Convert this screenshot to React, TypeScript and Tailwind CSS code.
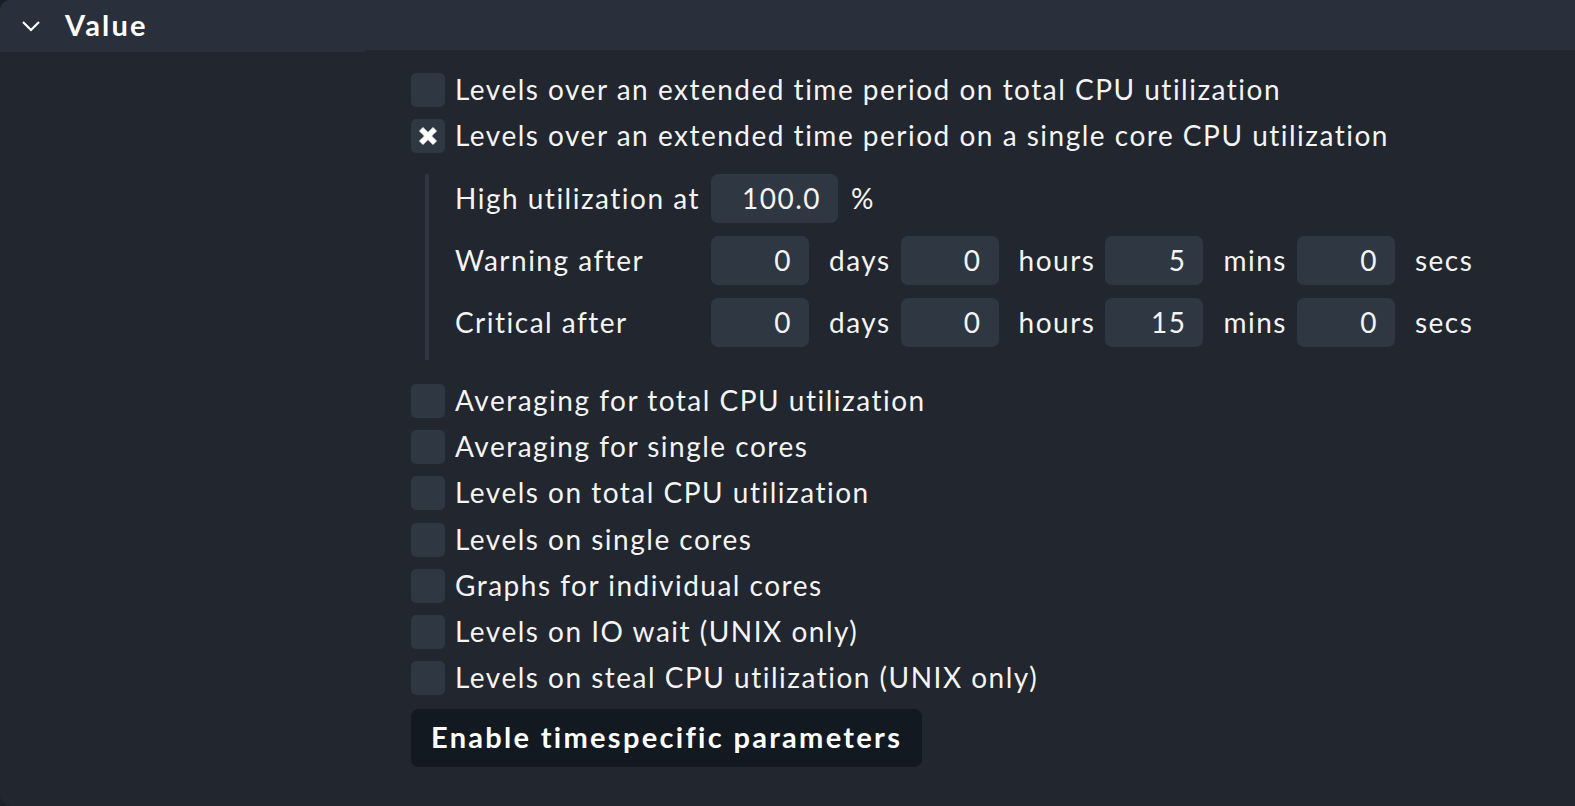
import React from "react";

const font = { fontFamily: "Lato, 'Noto Sans', sans-serif" };
const txt = "text-[28px] tracking-[1.5px] text-[#f4f4f4] leading-none pb-[2px]";

function Checkbox({ checked }: { checked?: boolean }) {
  return (
    <div className="w-[34px] h-[34px] rounded-[5px] bg-[#2f3743] flex items-center justify-center shrink-0">
      {checked && (
        <svg width="22" height="22" viewBox="0 0 22 22">
          <path
            d="M2.5 6 L6 2.5 L11 7.5 L16 2.5 L19.5 6 L14.5 11 L19.5 16 L16 19.5 L11 14.5 L6 19.5 L2.5 16 L7.5 11 Z"
            fill="#ffffff"
            stroke="#ffffff"
            strokeWidth="0.8"
            strokeLinejoin="round"
          />
        </svg>
      )}
    </div>
  );
}

function Row({ label, checked }: { label: string; checked?: boolean }) {
  return (
    <div className="flex items-center gap-[10px] h-[34px]">
      <Checkbox checked={checked} />
      <span className={txt}>{label}</span>
    </div>
  );
}

function NumInput({ value, w = "w-[98px]" }: { value: string; w?: string }) {
  return (
    <div className={`${w} h-[49px] rounded-[7px] bg-[#2f3743] flex items-center justify-end pr-[17px] shrink-0 ${txt}`}>
      {value}
    </div>
  );
}

function TimeRow({ label, vals }: { label: string; vals: string[] }) {
  const units = ["days", "hours", "mins", "secs"];
  return (
    <div className="flex items-center h-[49px]">
      <div className={`w-[256px] ${txt}`}>{label}</div>
      {vals.map((v, i) => (
        <div key={i} className="flex items-center">
          <NumInput value={v} />
          <span className={`ml-[20px] mr-[10px] ${txt}`}>{units[i]}</span>
        </div>
      ))}
    </div>
  );
}

export default function App() {
  const lower = [
    "Averaging for total CPU utilization",
    "Averaging for single cores",
    "Levels on total CPU utilization",
    "Levels on single cores",
    "Graphs for individual cores",
    "Levels on IO wait (UNIX only)",
    "Levels on steal CPU utilization (UNIX only)",
  ];
  return (
    <div className="w-[1575px] h-[806px] bg-[#1a1f26] overflow-hidden" style={font}>
      <div className="h-full rounded-l-[10px] bg-[#21262f] overflow-hidden flex flex-col">
        <div className="flex items-start">
          <div className="w-[365px] h-[52px] bg-[#29303b] flex items-center">
            <svg className="ml-[21px]" width="20" height="12" viewBox="0 0 20 12">
              <path d="M2 2 L10 10 L18 2" fill="none" stroke="#ffffff" strokeWidth="2.2" />
            </svg>
            <span className="ml-[24px] pb-[4px] text-[29px] font-bold tracking-[2.2px] text-white leading-none">Value</span>
          </div>
          <div className="flex-1 h-[50px] bg-[#29303b]" />
        </div>
        <div className="pl-[411px] pt-[21px] flex flex-col">
          <div className="flex flex-col gap-[12px]">
            <Row label="Levels over an extended time period on total CPU utilization" />
            <Row label="Levels over an extended time period on a single core CPU utilization" checked />
          </div>
          <div className="mt-[21px] ml-[14px] border-l-4 border-[#2f3641] pl-[26px] flex flex-col gap-[13px] pb-[13px]">
            <div className="flex items-center h-[49px]">
              <div className={`w-[256px] ${txt}`}>High utilization at</div>
              <NumInput value="100.0" w="w-[127px]" />
              <span className={`ml-[13px] ${txt}`}>%</span>
            </div>
            <TimeRow label="Warning after" vals={["0", "0", "5", "0"]} />
            <TimeRow label="Critical after" vals={["0", "0", "15", "0"]} />
          </div>
          <div className="mt-[24px] flex flex-col gap-[12.2px]">
            {lower.map((l) => (
              <Row key={l} label={l} />
            ))}
          </div>
          <div className="mt-[14px]">
            <div className="inline-flex items-center h-[58px] px-[20px] pb-[4px] rounded-[8px] bg-[#131920] text-[29px] font-bold tracking-[2.3px] text-white leading-none">
              Enable timespecific parameters
            </div>
          </div>
        </div>
      </div>
    </div>
  );
}
